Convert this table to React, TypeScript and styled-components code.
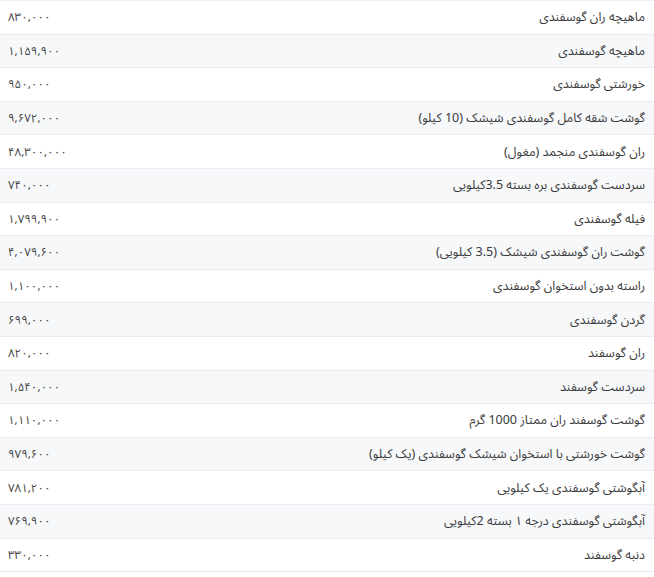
import styled, { createGlobalStyle } from "styled-components";

const prices = [
  { name: "ماهیچه ران گوسفندی", price: "۸۳۰,۰۰۰" },
  { name: "ماهیچه گوسفندی", price: "۱,۱۵۹,۹۰۰" },
  { name: "خورشتی گوسفندی", price: "۹۵۰,۰۰۰" },
  { name: "گوشت شقه کامل گوسفندی شیشک (10 کیلو)", price: "۹,۶۷۲,۰۰۰" },
  { name: "ران گوسفندی منجمد (مغول)", price: "۴۸,۳۰۰,۰۰۰" },
  { name: "سردست گوسفندی بره بسته 3.5کیلویی", price: "۷۴۰,۰۰۰" },
  { name: "فیله گوسفندی", price: "۱,۷۹۹,۹۰۰" },
  { name: "گوشت ران گوسفندی شیشک (3.5 کیلویی)", price: "۴,۰۷۹,۶۰۰" },
  { name: "راسته بدون استخوان گوسفندی", price: "۱,۱۰۰,۰۰۰" },
  { name: "گردن گوسفندی", price: "۶۹۹,۰۰۰" },
  { name: "ران گوسفند", price: "۸۲۰,۰۰۰" },
  { name: "سردست گوسفند", price: "۱,۵۴۰,۰۰۰" },
  { name: "گوشت گوسفند ران ممتاز 1000 گرم", price: "۱,۱۱۰,۰۰۰" },
  { name: "گوشت خورشتی با استخوان شیشک گوسفندی (یک کیلو)", price: "۹۷۹,۶۰۰" },
  { name: "آبگوشتی گوسفندی یک کیلویی", price: "۷۸۱,۲۰۰" },
  { name: "آبگوشتی گوسفندی درجه ۱ بسته 2کیلویی", price: "۷۶۹,۹۰۰" },
  { name: "دنبه گوسفند", price: "۳۳۰,۰۰۰" },
];

const GlobalStyle = createGlobalStyle`
  html, body {
    margin: 0;
    padding: 0;
    background: #ffffff;
  }
`;

const Table = styled.div`
  direction: rtl;
  width: 654px;
  border-top: 1px solid #eceff3;
  font-family: "Noto Sans Arabic", "DejaVu Sans", sans-serif;
  font-size: 12.5px;
  color: #3a3a3a;
`;

const Row = styled.div<{ $shaded: boolean }>`
  display: flex;
  align-items: center;
  justify-content: space-between;
  box-sizing: border-box;
  height: 33.6px;
  padding: 0 9px 0 8px;
  border-bottom: 1px solid #e8ecf1;
  background: ${(p) => (p.$shaded ? "#f6f8fa" : "#ffffff")};
`;

const Name = styled.span`
  white-space: nowrap;
`;

const Price = styled.span`
  direction: ltr;
  white-space: nowrap;
  font-size: 11.5px;
  letter-spacing: -0.4px;
  color: #444;
`;

export default function App() {
  return (
    <>
      <GlobalStyle />
      <Table>
        {prices.map((item, i) => (
          <Row key={i} $shaded={i % 2 === 1}>
            <Name>{item.name}</Name>
            <Price>{item.price}</Price>
          </Row>
        ))}
      </Table>
    </>
  );
}
